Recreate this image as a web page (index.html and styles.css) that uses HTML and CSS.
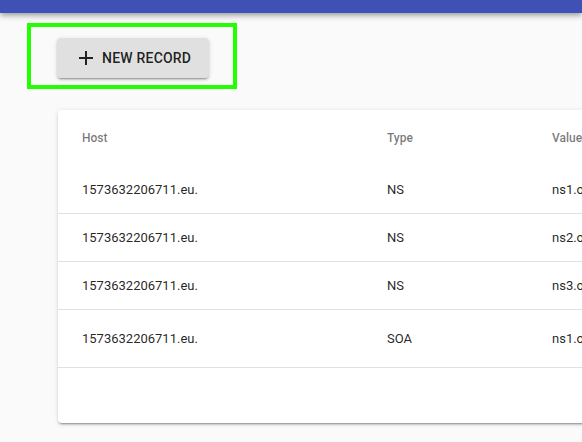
FILE: index.html
```html
<!DOCTYPE html>
<html>
<head>
<meta charset="utf-8">
<link rel="stylesheet" href="styles.css">
</head>
<body>
<header class="topbar"></header>
<main class="content">
  <div class="highlight">
    <button class="btn">
      <svg class="plus" width="14" height="14" viewBox="0 0 14 14"><path d="M7 0v14M0 7h14" stroke="#212121" stroke-width="2" fill="none"/></svg>
      <span>New record</span>
    </button>
  </div>
  <section class="card">
    <div class="row head">
      <div>Host</div><div>Type</div><div>Value</div>
    </div>
    <div class="row">
      <div>1573632206711.eu.</div><div>NS</div><div>ns1.openprovider.nl.</div>
    </div>
    <div class="row">
      <div>1573632206711.eu.</div><div>NS</div><div>ns2.openprovider.be.</div>
    </div>
    <div class="row">
      <div>1573632206711.eu.</div><div>NS</div><div>ns3.openprovider.eu.</div>
    </div>
    <div class="row tall">
      <div>1573632206711.eu.</div><div>SOA</div><div>ns1.openprovider.nl.</div>
    </div>
    <div class="footer"></div>
  </section>
</main>
</body>
</html>
```
FILE: styles.css
```css
html, body {
  margin: 0;
  padding: 0;
  background: #fafafa;
  font-family: Roboto, "Liberation Sans", sans-serif;
  overflow: hidden;
  width: 582px;
  height: 442px;
}
.topbar {
  height: 13px;
  background: #3f51b5;
  box-shadow: 0 2px 4px -1px rgba(0,0,0,.2), 0 4px 5px 0 rgba(0,0,0,.14), 0 1px 10px 0 rgba(0,0,0,.12);
}
.content {
  padding: 10px 0 0 27px;
}
.highlight {
  width: fit-content;
  border: 4px solid #22ff00;
  padding: 11px 24px 7px 26px;
}
.btn {
  display: flex;
  align-items: center;
  gap: 9px;
  box-sizing: border-box;
  width: 152px;
  height: 40px;
  padding: 0 0 0 22px;
  border: none;
  border-radius: 4px;
  background: #e0e0e0;
  color: rgba(0,0,0,.87);
  font-family: Roboto, "Liberation Sans", sans-serif;
  font-weight: 500;
  font-size: 14px;
  letter-spacing: 0.015em;
  text-transform: uppercase;
  box-shadow: 0 3px 1px -2px rgba(0,0,0,.2), 0 2px 2px 0 rgba(0,0,0,.14), 0 1px 5px 0 rgba(0,0,0,.12);
}
.plus { flex: none; }
.card {
  margin: 21px 0 0 31px;
  width: 640px;
  background: #fff;
  border-radius: 4px;
  box-shadow: 0 3px 1px -2px rgba(0,0,0,.2), 0 2px 2px 0 rgba(0,0,0,.14), 0 1px 5px 0 rgba(0,0,0,.12);
}
.row {
  display: grid;
  grid-template-columns: 305px 165px 1fr;
  align-items: center;
  padding-left: 24px;
  height: 47px;
  border-bottom: 1px solid #e0e0e0;
  font-size: 13px;
  color: rgba(0,0,0,.87);
  white-space: nowrap;
}
.row.head {
  height: 56px;
  border-bottom: none;
  font-size: 12px;
  font-weight: 500;
  color: rgba(0,0,0,.54);
}
.row.tall { height: 57px; }
.footer { height: 55px; }
```
